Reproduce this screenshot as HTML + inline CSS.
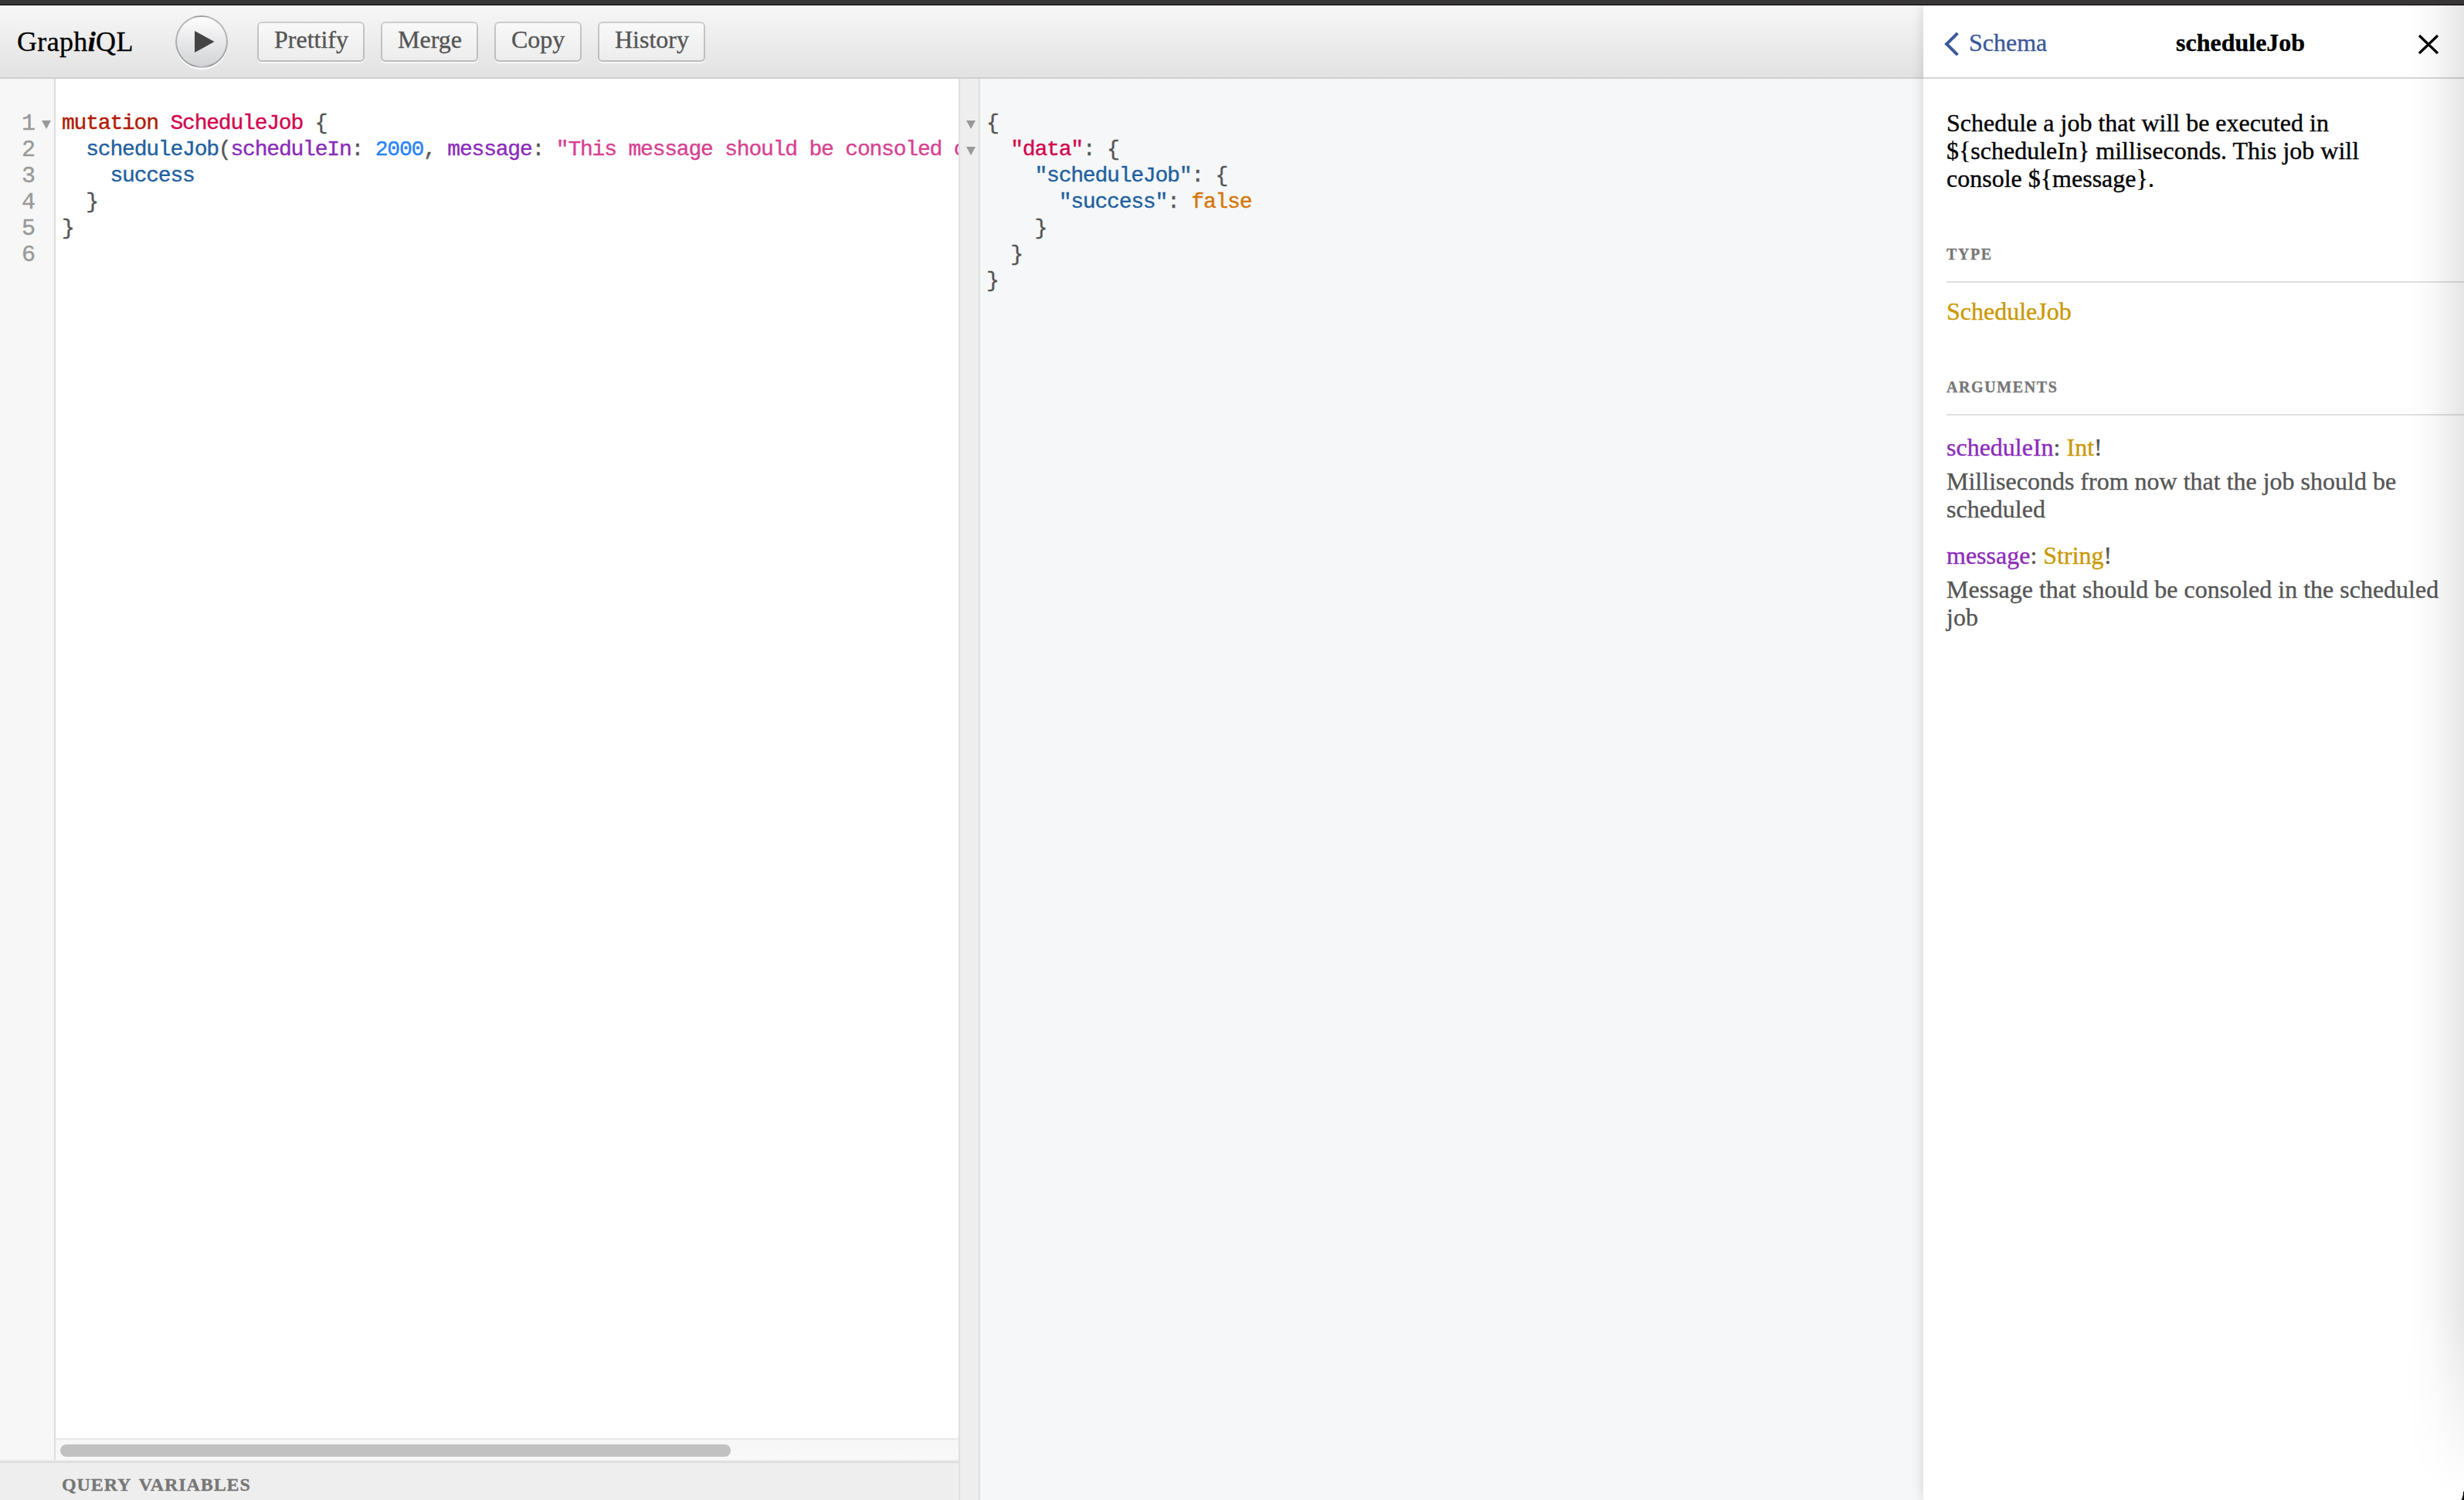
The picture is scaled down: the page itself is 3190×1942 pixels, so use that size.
<!DOCTYPE html>
<html><head><meta charset="utf-8">
<style>
html,body{margin:0;padding:0;width:3190px;height:1942px;overflow:hidden;background:#fff;}
body{position:relative;font-family:"Liberation Serif",serif;color:#000;}
.abs{position:absolute;}
.t{position:absolute;white-space:pre;line-height:1;-webkit-text-stroke:0.35px currentColor;}
.serif32{font-family:"Liberation Serif",serif;font-size:32px;}
.mono{font-family:"Liberation Mono",monospace;font-size:28px;letter-spacing:-1.2px;-webkit-text-stroke:0.4px currentColor;}
#chrome{left:0;top:0;width:3190px;height:6px;background:#383637;}
#chromeline{left:0;top:6px;width:3190px;height:1px;background:#000;}
#topbar{left:0;top:7px;width:2490px;height:93px;background:linear-gradient(#f7f7f7,#e2e2e2);border-bottom:2px solid #d0d0d0;}
#exec{left:227px;top:20px;width:64px;height:64px;border-radius:50%;border:2px solid rgba(0,0,0,0.25);background:linear-gradient(#fdfdfd,#d2d3d6);box-shadow:0 2px 0 #fff;}
.btn{position:absolute;top:28px;height:52px;border-radius:6px;background:linear-gradient(#f9f9f9,#ececec);box-shadow:inset 0 0 0 2px rgba(0,0,0,0.2),0 2px 0 rgba(255,255,255,0.7),inset 0 2px #fff;}
.btxt{color:#555;}
#gutter{left:0;top:102px;width:70px;height:1788px;background:#f7f7f7;border-right:2px solid #ddd;}
#editor{left:72px;top:102px;width:1169px;height:1760px;background:#fff;overflow:hidden;}
#resborder{left:1241px;top:102px;width:2px;height:1840px;background:#e0e0e0;}
#resgutter{left:1243px;top:102px;width:24px;height:1840px;background:#eee;border-right:2px solid #e0e0e0;}
#result{left:1269px;top:102px;width:1221px;height:1840px;background:#f6f7f8;}
#hscroll{left:72px;top:1862px;width:1169px;height:28px;background:linear-gradient(#f6f6f6,#f9f9f9);border-top:2px solid #e8e8e8;box-sizing:border-box;}
#thumb{left:78px;top:1870px;width:868px;height:16px;border-radius:8px;background:#c1c1c1;}
#vartitle{left:0;top:1890px;width:1241px;height:52px;background:linear-gradient(#ebebeb 0,#ebebeb 2px,#dcdcdc 2px,#dcdcdc 4px,#eee 4px);}
#doc{left:2490px;top:6px;width:700px;height:1936px;background:#fff;box-shadow:0 0 16px rgba(0,0,0,0.15);}
#docborder{left:2490px;top:100px;width:700px;height:2px;background:#d6d6d6;}
.rule{position:absolute;left:2520px;width:670px;height:2px;background:#e0e0e0;}
.cat{font-family:"Liberation Serif",serif;font-size:28px;font-weight:bold;font-variant:small-caps;letter-spacing:1.6px;color:#777;}
.kw{color:#B11A04}.def{color:#D2054E}.pu{color:#555}.prop{color:#1F61A0}.attr{color:#8B2BB9}.num{color:#2882F9}.str{color:#D64292}.bi{color:#D47509}
.ln{color:#999;}
.fold{position:absolute;width:0;height:0;border-left:6px solid transparent;border-right:6px solid transparent;border-top:11px solid #999;}
#rshade{left:3116px;top:0;width:74px;height:1942px;background:linear-gradient(to right,rgba(0,0,0,0) 0%,rgba(0,0,0,0.025) 45%,rgba(0,0,0,0.1) 100%);-webkit-mask-image:linear-gradient(to bottom,#000 0px,#000 1690px,transparent 1935px);}
</style></head>
<body>
<div id="topbar" class="abs"></div>

<!-- title -->
<div class="t" style="left:22px;top:36px;font-size:36px;color:#000;letter-spacing:0.35px;">Graph<i style="font-weight:bold">i</i>QL</div>

<div id="exec" class="abs"></div>
<svg class="abs" style="left:252px;top:40px" width="26" height="28" viewBox="0 0 26 28"><path d="M0 0 L25.5 14 L0 28 Z" fill="#444"/></svg>

<div class="btn" style="left:333px;width:139px;"></div>
<div class="t serif32 btxt" style="left:355px;top:35px;">Prettify</div>
<div class="btn" style="left:493px;width:126px;"></div>
<div class="t serif32 btxt" style="left:515px;top:35px;">Merge</div>
<div class="btn" style="left:640px;width:113px;"></div>
<div class="t serif32 btxt" style="left:662px;top:35px;">Copy</div>
<div class="btn" style="left:774px;width:139px;"></div>
<div class="t serif32 btxt" style="left:796px;top:35px;">History</div>

<div id="gutter" class="abs"></div>
<div id="editor" class="abs"></div>
<div id="resborder" class="abs"></div>
<div id="resgutter" class="abs"></div>
<div id="result" class="abs"></div>

<!-- editor text -->
<div class="abs mono" style="left:72px;top:143px;width:1169px;height:240px;overflow:hidden;line-height:34px;white-space:pre;"><div style="padding-left:8px"><span class="kw">mutation</span> <span class="def">ScheduleJob</span> <span class="pu">{</span></div><div style="padding-left:8px">  <span class="prop">scheduleJob</span><span class="pu">(</span><span class="attr">scheduleIn</span><span class="pu">:</span> <span class="num">2000</span><span class="pu">,</span> <span class="attr">message</span><span class="pu">:</span> <span class="str">"This message should be consoled correctly"</span><span class="pu">)</span> <span class="pu">{</span></div><div style="padding-left:8px">    <span class="prop">success</span></div><div style="padding-left:8px">  <span class="pu">}</span></div><div style="padding-left:8px"><span class="pu">}</span></div><div style="padding-left:8px"> </div></div>
<div class="abs mono ln" style="left:0;top:143px;width:46px;line-height:34px;text-align:right;white-space:pre;font-size:30px;letter-spacing:0;">1
2
3
4
5
6</div>
<div class="fold" style="left:54px;top:156px;"></div>
<div class="abs mono" style="left:1269px;top:143px;width:1221px;line-height:34px;white-space:pre;padding-left:8px;box-sizing:border-box;"><span class="pu">{</span>
  <span class="def">"data"</span><span class="pu">:</span> <span class="pu">{</span>
    <span class="prop">"scheduleJob"</span><span class="pu">:</span> <span class="pu">{</span>
      <span class="prop">"success"</span><span class="pu">:</span> <span class="bi">false</span>
    <span class="pu">}</span>
  <span class="pu">}</span>
<span class="pu">}</span></div>
<div class="fold" style="left:1251px;top:156px;"></div>
<div class="fold" style="left:1251px;top:190px;"></div>


<div id="hscroll" class="abs"></div>
<div id="thumb" class="abs"></div>
<div id="vartitle" class="abs"></div>
<div class="t cat" style="left:80px;top:1902px;font-size:34px;letter-spacing:0.9px;">query variables</div>

<div id="doc" class="abs"></div>
<div id="docborder" class="abs"></div>
<!-- doc title bar -->
<div class="abs" style="left:2522px;top:46px;width:18px;height:18px;border-left:4px solid #3B5998;border-top:4px solid #3B5998;transform:rotate(-45deg);"></div>
<div class="t serif32" style="left:2549px;top:39px;color:#3B5998;">Schema</div>
<div class="t serif32" style="left:2817px;top:39px;font-weight:bold;color:#000;">scheduleJob</div>
<svg class="abs" style="left:3130px;top:44px" width="28" height="27" viewBox="0 0 28 27"><path d="M2 2 L26 25 M26 2 L2 25" stroke="#000" stroke-width="3.2"/></svg>
<!-- doc contents -->
<div class="t serif32" style="left:2520px;top:143px;">Schedule a job that will be executed in</div>
<div class="t serif32" style="left:2520px;top:179px;">${scheduleIn} milliseconds. This job will</div>
<div class="t serif32" style="left:2520px;top:215px;">console ${message}.</div>
<div class="t cat" style="left:2520px;top:313px;">type</div>
<div class="rule" style="top:364px;"></div>
<div class="t serif32" style="left:2520px;top:387px;color:#CA9800;">ScheduleJob</div>
<div class="t cat" style="left:2520px;top:485px;">arguments</div>
<div class="rule" style="top:536px;"></div>
<div class="t serif32" style="left:2520px;top:563px;"><span style="color:#8B2BB9">scheduleIn</span><span style="color:#555">: </span><span style="color:#CA9800">Int</span><span style="color:#555">!</span></div>
<div class="t serif32" style="left:2520px;top:607px;color:#555;">Milliseconds from now that the job should be</div>
<div class="t serif32" style="left:2520px;top:643px;color:#555;">scheduled</div>
<div class="t serif32" style="left:2520px;top:703px;"><span style="color:#8B2BB9">message</span><span style="color:#555">: </span><span style="color:#CA9800">String</span><span style="color:#555">!</span></div>
<div class="t serif32" style="left:2520px;top:747px;color:#555;">Message that should be consoled in the scheduled</div>
<div class="t serif32" style="left:2520px;top:783px;color:#555;">job</div>

<div id="rshade" class="abs"></div>
<div id="chrome" class="abs"></div>
<div id="chromeline" class="abs"></div>

<svg class="abs" style="left:3180px;top:1926px" width="10" height="16" viewBox="0 0 10 16"><path d="M10 5 L10 16 L6.5 16 Q9 12 9 5 Z" fill="#000"/></svg>
</body></html>
